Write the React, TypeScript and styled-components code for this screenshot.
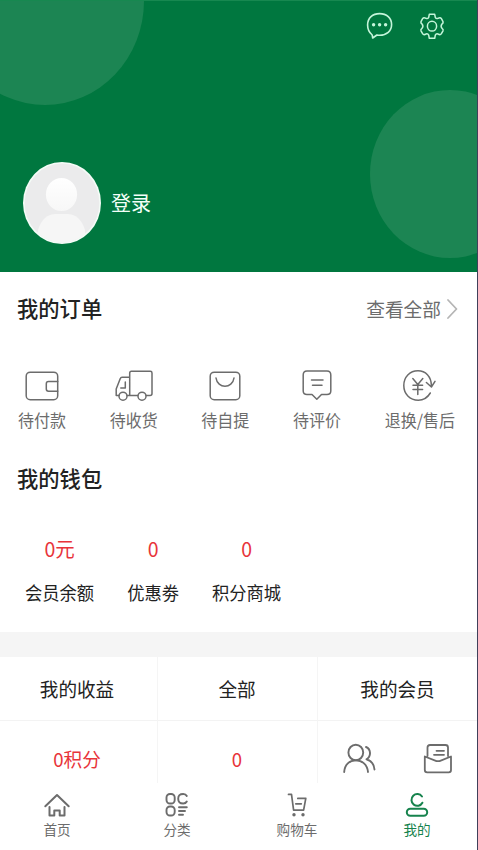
import React from "react";
import styled, { createGlobalStyle } from "styled-components";

const Global = createGlobalStyle`
  * { box-sizing: border-box; }
  body { margin: 0; background: #fff; font-family: "Noto Sans CJK SC", "Noto Sans", sans-serif; }
  svg { display: block; }
`;

const Screen = styled.div`
  width: 478px;
  height: 850px;
  overflow: hidden;
  display: flex;
  flex-direction: column;
  border-right: 1px solid #40405a;
  color: #222;
`;

const Header = styled.header`
  position: relative;
  height: 272px;
  flex: none;
  overflow: hidden;
  background: #00773f;
  border-top: 1px solid #178850;
  color: #f4fff8;
`;

const Bubble = styled.div<{ $x: number; $y: number; $w: number; $h: number }>`
  position: absolute;
  left: ${(p) => p.$x}px;
  top: ${(p) => p.$y}px;
  width: ${(p) => p.$w}px;
  height: ${(p) => p.$h}px;
  border-radius: 50%;
  background: #1c8553;
`;

const Tools = styled.div`
  position: relative;
  display: flex;
  justify-content: flex-end;
  gap: 26px;
  padding: 10px 32px 0 0;
  color: #c4f5da;
`;

const Profile = styled.div`
  position: relative;
  display: flex;
  align-items: center;
  gap: 10px;
  margin: 121px 0 0 23px;
`;

const Avatar = styled.div`
  width: 78px;
  height: 82px;
`;

const Label = styled.span<{ $size: number; $color?: string; $weight?: number; $dy?: number }>`
  display: block;
  font-size: ${(p) => p.$size}px;
  line-height: 24px;
  font-weight: ${(p) => p.$weight ?? 400};
  color: ${(p) => p.$color ?? "inherit"};
  white-space: nowrap;
  transform: translateY(${(p) => p.$dy ?? -0.8}px) scaleY(1.04);
`;

const TitleRow = styled.div`
  display: flex;
  justify-content: space-between;
  align-items: center;
  height: 74px;
  padding: 0 19px 0 17px;
  flex: none;
`;

const More = styled.div`
  display: flex;
  align-items: center;
  gap: 5px;
  color: #b5b5b5;
`;

const Orders = styled.div`
  display: flex;
  justify-content: space-between;
  height: 96px;
  padding: 24px 22px 0 18px;
  flex: none;
  color: #6c6c6c;
`;

const Stack = styled.div<{ $gap: number }>`
  display: flex;
  flex-direction: column;
  align-items: center;
  gap: ${(p) => p.$gap}px;
`;

const Wallet = styled.div`
  display: flex;
  gap: 33px;
  height: 116px;
  padding: 21px 0 0 25px;
  flex: none;
`;

const Band = styled.div`
  height: 25px;
  flex: none;
  background: #f5f5f5;
`;

const Table = styled.div`
  display: grid;
  grid-template-columns: 158px 160px 1fr;
  grid-template-rows: 64px 62px;
  flex: none;
`;

const Cell = styled.div<{ $head?: boolean; $last?: boolean; $shift?: number }>`
  display: flex;
  align-items: center;
  justify-content: center;
  gap: 47px;
  border-right: ${(p) => (p.$last ? 0 : 1)}px solid #f5f5f5;
  border-bottom: ${(p) => (p.$head ? 1 : 0)}px solid #f3f3f3;
  padding: ${(p) => (p.$head ? 0 : 14)}px ${(p) => p.$shift ?? 0}px 0 0;
  color: ${(p) => (p.$head ? "#222" : "#6c6c6c")};
`;

const Nav = styled.nav`
  display: grid;
  grid-template-columns: repeat(4, 120px);
  margin-left: -3px;
  padding-top: 8px;
  flex: 1;
`;

const Tab = styled.div<{ $active?: boolean }>`
  display: flex;
  flex-direction: column;
  align-items: center;
  color: ${(p) => (p.$active ? "#16834d" : "#6c6c6c")};

  svg {
    margin-bottom: -1px;
  }
`;

const red = "#e8343a";

const Icon = ({ w, h, sw = 1.5, children }: { w: number; h: number; sw?: number; children: React.ReactNode }) => (
  <svg
    width={w}
    height={h}
    viewBox={`0 0 ${w} ${h}`}
    fill="none"
    stroke="currentColor"
    strokeLinecap="round"
    strokeLinejoin="round"
    strokeWidth={sw}
  >
    {children}
  </svg>
);

const ChatIcon = () => (
  <Icon w={28} h={30} sw={1.6}>
    <path d="M7.2 24C4.2 21.6 2.6 18.2 2.6 14 2.6 7 7.6 2.6 14.6 2.6S26.6 7 26.6 13.6 21.6 24.3 14.6 24.3c-1 0-1.9-.1-2.700-.3L7.700 27Z" />
    <g fill="currentColor" stroke="none">
      <circle cx="8.600" cy="13.700" r="1.700" />
      <circle cx="14.600" cy="13.700" r="1.700" />
      <circle cx="20.600" cy="13.700" r="1.700" />
    </g>
  </Icon>
);

const GearIcon = () => (
  <Icon w={26} h={30} sw={1.5}>
    <path d="M10.300 3.300H15.700L16.300 6.300Q17.200 8 18.900 7.400 21.300 6 22.400 7.700L24 10.600Q24.600 12.200 23 13 21.200 15.200 23 17.400 24.600 18.400 24 19.800L22.400 22.700Q21.300 24.400 18.900 23 17.200 22.400 16.300 24.100L15.700 27.300H10.300L9.700 24.100Q8.800 22.400 7.100 23 4.700 24.400 3.600 22.700L2 19.800Q1.400 18.400 3 17.400 4.800 15.200 3 13 1.400 12.200 2 10.600L3.600 7.700Q4.700 6 7.100 7.400 8.800 8 9.700 6.300Z" />
    <ellipse cx="13" cy="15.200" rx="4.600" ry="4.900" />
  </Icon>
);

const AvatarArt = () => (
  <svg width="78" height="82" viewBox="0 0 78 82">
    <defs>
      <clipPath id="face"><ellipse cx="39" cy="41" rx="37.400" ry="39.400" /></clipPath>
      <linearGradient id="shade" x1="0" y1="0" x2="0" y2="1">
        <stop offset="0" stopColor="#fff" /><stop offset="1" stopColor="#f7f7f7" />
      </linearGradient>
    </defs>
    <ellipse cx="39" cy="41" rx="39" ry="41" fill="#f4fcf7" />
    <g clipPath="url(#face)">
      <rect width="78" height="82" fill="#ebebec" />
      <ellipse cx="38.500" cy="32.500" rx="15.600" ry="16.500" fill="url(#shade)" />
      <path d="M15 82V68Q20 52 33 52H44Q57 52 62 68V82Z" fill="#f6f6f6" />
    </g>
  </svg>
);

const orders = [
  { label: "待付款", icon: (
    <Icon w={34} h={32}>
      <rect x="1.200" y="2.200" width="31.500" height="27.500" rx="4" />
      <path d="M32.700 11.500H23.500Q21.300 11.500 21.300 13.700V19Q21.300 21.200 23.500 21.200H32.700" />
    </Icon>) },
  { label: "待收货", icon: (
    <Icon w={38} h={32}>
      <path d="M14.700 25.500V3Q14.700 1.300 16.400 1.300H35.300Q37 1.300 37 3V23.500Q37 25.500 35 25.500H31.300M22.600 25.500H12.300M4 25.500H1.200V19L5.300 8.500Q5.800 7.300 7 7.300H14.500M10.300 12V18H5.800" />
      <circle cx="8" cy="26.200" r="4" /><circle cx="27" cy="26.200" r="4" />
    </Icon>) },
  { label: "待自提", icon: (
    <Icon w={32} h={32}>
      <rect x="1.200" y="2.200" width="29.600" height="27.500" rx="4" />
      <path d="M7 8C8.500 19 23.500 19 25 8" />
    </Icon>) },
  { label: "待评价", icon: (
    <Icon w={30} h={32}>
      <path d="M5 .9H25Q28.800 .9 28.800 4.900V21Q28.800 24.500 25 24.500H19.500L14.800 29.300 10 24.500H5Q1.200 24.500 1.200 21V4.900Q1.200 .9 5 .9ZM9.500 10H21M10.500 15.200H20" />
    </Icon>) },
  { label: "退换/售后", icon: (
    <Icon w={36} h={32}>
      <path d="M28.300 23C25.600 27.500 21.500 30.200 16.300 30.200 7.700 30.200 1.800 23.800 1.800 15.500S7.700 .8 16 .8C23.500 .8 29.200 6.500 29.400 15.500M24.400 12.500L29.400 17 33 11.300M10.800 8.500L15.800 14.500 20.800 8.500M11 15.300H20.600M11 19.600H20.600M15.800 14.500V24.500" />
    </Icon>) },
];

const wallet = [["0元", "会员余额"], ["0", "优惠劵"], ["0", "积分商城"]];

const MembersIcon = () => (
  <Icon w={33} h={32} sw={1.9}>
    <ellipse cx="12.800" cy="9.500" rx="7.400" ry="7.800" />
    <path d="M1.200 29C1.700 21.500 6.500 17.400 12.800 17.400S24.300 21.500 25 29M23 4C28 6 28.500 13.500 23.500 16.300 28 17.500 31 21 31.500 26.500" />
  </Icon>
);

const MailIcon = () => (
  <Icon w={30} h={32} sw={1.8}>
    <path d="M4.500 13V4.500Q4.500 2 7 2H22.500Q25 2 25 4.500V13M1.800 13.500L13.500 18.200H16.500L28 13.500V27Q28 29.300 25.700 29.300H4.200Q1.800 29.300 1.800 27ZM13.500 7.800H21M11 11.800H21" />
  </Icon>
);

const tabs = [
  { label: "首页", icon: (
    <Icon w={28} h={28} sw={2}>
      <path d="M2.300 15.300L14 4 25.700 15.300" />
      <path d="M6.500 16V24.500H11.300V19.500H16.700V24.500H21.500V16" />
    </Icon>) },
  { label: "分类", icon: (
    <Icon w={28} h={28} sw={1.9}>
      <rect x="3.500" y="3" width="8.200" height="9.500" rx="3.500" />
      <path d="M23.800 5C23 3.500 21.900 3 20.200 3 16.800 3 15.200 4.600 15.200 7.700S16.800 12.500 20.200 12.500C21.900 12.500 23 12 23.800 10.500M16 16.300H23.800M16 20H22M16 23.700H20" />
      <rect x="3.500" y="15.500" width="8.200" height="9" rx="3.500" />
    </Icon>) },
  { label: "购物车", icon: (
    <Icon w={28} h={28} sw={1.7}>
      <path d="M5.500 3.400H8.500L10.600 19.200H20.600L22.800 7.400H14.800M12.800 12.800H18.300" />
      <g fill="currentColor" stroke="none">
        <circle cx="11" cy="23.700" r="1.700" />
        <circle cx="20" cy="23.700" r="1.700" />
      </g>
    </Icon>) },
  { label: "我的", active: true, icon: (
    <Icon w={28} h={28} sw={2}>
      <path d="M19 5.500A5.800 5.900 0 1 0 19.400 11.700" />
      <rect x="3.800" y="17.700" width="20.400" height="7" rx="3.500" />
    </Icon>) },
];

export default function App() {
  return (
    <Screen>
      <Global />
      <Header>
        <Bubble $x={-54} $y={-104} $w={198} $h={208} />
        <Bubble $x={370} $y={89} $w={160} $h={168} />
        <Tools><ChatIcon /><GearIcon /></Tools>
        <Profile>
          <Avatar><AvatarArt /></Avatar>
          <Label $size={20} $dy={0}>登录</Label>
        </Profile>
      </Header>
      <TitleRow>
        <Label $size={21.3} $weight={500} $dy={-1.6}>我的订单</Label>
        <More>
          <Label $size={18.7} $color="#6c6c6c">查看全部</Label>
          <Icon w={12} h={22} sw={1.8}><path d="M2 2L10.500 11 2 20" /></Icon>
        </More>
      </TitleRow>
      <Orders>
        {orders.map((o) => (
          <Stack key={o.label} $gap={7}>
            {o.icon}
            <Label $size={16}>{o.label}</Label>
          </Stack>
        ))}
      </Orders>
      <TitleRow>
        <Label $size={21.3} $weight={500} $dy={-1.6}>我的钱包</Label>
      </TitleRow>
      <Wallet>
        {wallet.map(([value, name]) => (
          <Stack key={name} $gap={20}>
            <Label $size={19.5} $color={red}>{value}</Label>
            <Label $size={17.3} $dy={-0.2}>{name}</Label>
          </Stack>
        ))}
      </Wallet>
      <Band />
      <Table>
        <Cell $head $shift={3}><Label $size={18.6}>我的收益</Label></Cell>
        <Cell $head $shift={1}><Label $size={18.6}>全部</Label></Cell>
        <Cell $head $last><Label $size={18.6}>我的会员</Label></Cell>
        <Cell $shift={3}><Label $size={18.6} $color={red}>0积分</Label></Cell>
        <Cell $shift={1}><Label $size={18.6} $color={red}>0</Label></Cell>
        <Cell $last><MembersIcon /><MailIcon /></Cell>
      </Table>
      <Nav>
        {tabs.map((t) => (
          <Tab key={t.label} $active={t.active}>
            {t.icon}
            <Label $size={13.6}>{t.label}</Label>
          </Tab>
        ))}
      </Nav>
    </Screen>
  );
}
